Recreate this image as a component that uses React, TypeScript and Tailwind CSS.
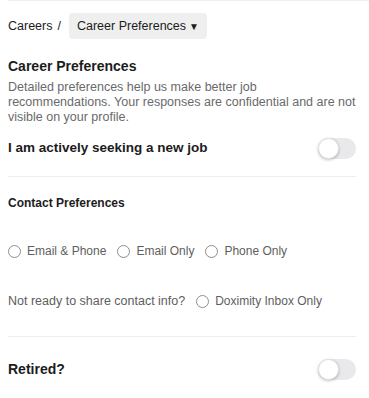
import React from "react";

function Toggle() {
  return (
    <div className="relative h-[21px] w-[38px] rounded-full bg-[#e9e9eb]">
      <div className="absolute left-0 top-0 h-[21px] w-[21px] rounded-full bg-white shadow-[0_1px_3px_rgba(0,0,0,0.25)] border border-[#e2e2e2]" />
    </div>
  );
}

function Radio({ label }: { label: string }) {
  return (
    <label className="flex items-center gap-[6px]">
      <span className="h-[13px] w-[13px] rounded-full border border-[#8e8e8e] bg-white" />
      <span className="text-[12px]">{label}</span>
    </label>
  );
}

export default function App() {
  return (
    <div
      className="w-[369px] h-[398px] bg-white text-[#1c1c1c] overflow-hidden"
      style={{ fontFamily: "'Liberation Sans', Arial, sans-serif" }}
    >
      <div className="ml-[8px] border-t border-[#efefef] pr-[13px]">
        <div className="flex items-center h-[26px] mt-[12px] text-[12.5px]">
          <span>Careers</span>
          <span className="ml-[5px] mr-[8px]">/</span>
          <div className="flex items-center h-[26px] pl-[8px] pr-[8px] rounded-[4px] bg-[#efefef]">
            Career Preferences <span className="ml-[3px] text-[10px]">▼</span>
          </div>
        </div>

        <div className="mt-[18px] text-[14px] font-bold leading-[18px]">Career Preferences</div>
        <p className="mt-[5px] text-[12.5px] leading-[15px] text-[#6a6a6a]">
          Detailed preferences help us make better job recommendations. Your responses are confidential and are not visible on your profile.
        </p>

        <div className="mt-[13px] flex items-center justify-between">
          <span className="text-[13.5px] font-bold">I am actively seeking a new job</span>
          <Toggle />
        </div>

        <div className="mt-[17px] border-t border-[#eeeeee]" />

        <div className="mt-[18px] text-[12px] font-bold leading-[16px]">Contact Preferences</div>

        <div className="mt-[32px] flex items-center gap-[11px] text-[#5e5e5e] leading-[16px]">
          <Radio label="Email & Phone" />
          <Radio label="Email Only" />
          <Radio label="Phone Only" />
        </div>

        <div className="mt-[34px] flex items-center gap-[11px] text-[12.5px] text-[#5e5e5e] leading-[16px]">
          <span>Not ready to share contact info?</span>
          <Radio label="Doximity Inbox Only" />
        </div>

        <div className="mt-[27px] border-t border-[#eeeeee]" />

        <div className="mt-[22px] flex items-center justify-between">
          <span className="text-[14px] font-bold">Retired?</span>
          <Toggle />
        </div>
      </div>
    </div>
  );
}
